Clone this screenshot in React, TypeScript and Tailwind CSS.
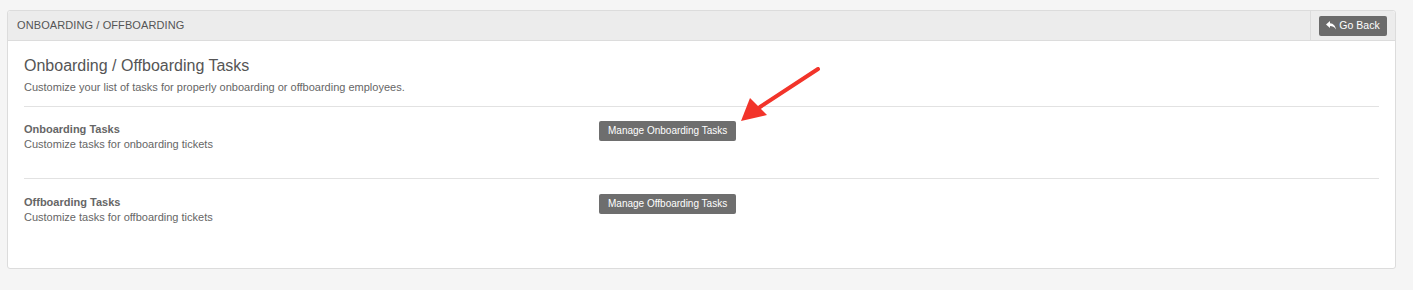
import React from "react";

function ReplyIcon() {
  return (
    <svg width="10" height="9" viewBox="0 0 10 9" className="mr-[3px]">
      <path d="M4 0 L0 3.5 L4 7 L4 5 C6.5 5 8.3 5.8 10 8.5 C9.5 5 7.5 2.5 4 2.2 Z" fill="#fff" />
    </svg>
  );
}

function Row({ title, desc, btn, last }: { title: string; desc: string; btn: string; last?: boolean }) {
  return (
    <div className={"flex items-start " + (last ? "pt-[15px] pb-[43px]" : "pt-[14px] pb-[26px] border-b border-[#e2e2e2]")}>
      <div className="w-[575px] pt-[1px]">
        <div className="text-[11px] leading-[15px] font-bold text-[#666]">{title}</div>
        <div className="text-[11px] leading-[15px] text-[#666]">{desc}</div>
      </div>
      <div className="flex">
        <button className="block h-[20px] px-[9px] bg-[#6e6e6e] text-white text-[10px] rounded-[2px] leading-[20px]">
          {btn}
        </button>
      </div>
    </div>
  );
}

export default function App() {
  return (
    <div className="min-h-[290px] bg-[#f5f5f5] pt-[10px] pl-[7px] pr-[17px] pb-[22px]" style={{ fontFamily: '"Liberation Sans", Arial, sans-serif' }}>
      <div className="border border-[#dcdcdc] rounded-[3px] bg-white relative">
        <div className="flex items-stretch h-[30px] bg-[#ececec] border-b border-[#dcdcdc] rounded-t-[3px]">
          <div className="flex-1 flex items-center pl-[9px] text-[11px] text-[#555] tracking-[0.1px]">ONBOARDING / OFFBOARDING</div>
          <div className="w-[85px] border-l border-[#dcdcdc] flex items-center pl-[8px]">
            <button className="h-[20px] w-[68px] flex items-center justify-center bg-[#6b6b6b] text-white text-[10.5px] rounded-[2px]">
              <ReplyIcon />
              Go Back
            </button>
          </div>
        </div>
        <div className="px-[16px] pt-[15px]">
          <div className="text-[16px] leading-[20px] text-[#555]">Onboarding / Offboarding Tasks</div>
          <div className="mt-[4px] text-[11px] leading-[15px] text-[#666] pb-[11px] border-b border-[#e2e2e2]">
            Customize your list of tasks for properly onboarding or offboarding employees.
          </div>
          <Row title="Onboarding Tasks" desc="Customize tasks for onboarding tickets" btn="Manage Onboarding Tasks" />
          <Row title="Offboarding Tasks" desc="Customize tasks for offboarding tickets" btn="Manage Offboarding Tasks" last />
        </div>
        <svg className="absolute left-[731px] top-[56px] pointer-events-none" width="90" height="70" viewBox="0 0 90 70">
          <line x1="79" y1="2" x2="21" y2="40" stroke="#f2342a" strokeWidth="4" strokeLinecap="round" />
          <polygon points="2,54 11,31 28,48" fill="#f2342a" />
        </svg>
      </div>
    </div>
  );
}
